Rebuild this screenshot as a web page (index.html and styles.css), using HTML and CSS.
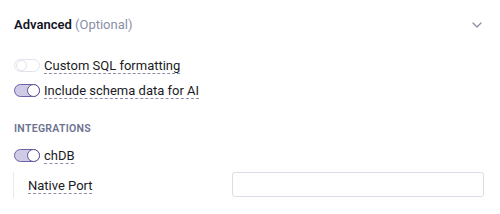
FILE: index.html
```html
<!DOCTYPE html>
<html>
<head>
<meta charset="utf-8">
<link rel="stylesheet" href="styles.css">
</head>
<body>
<div class="panel">
  <div class="header">
    <div class="title"><span class="strong">Advanced</span> <span class="muted">(Optional)</span></div>
    <svg class="chevron" width="10" height="6" viewBox="0 0 10 6"><path d="M1 1 L5 5 L9 1" fill="none" stroke="#8a90aa" stroke-width="1.3" stroke-linecap="round" stroke-linejoin="round"/></svg>
  </div>
  <div class="options">
    <label class="row"><span class="toggle"><span class="thumb"></span></span><span class="label">Custom SQL formatting</span></label>
    <label class="row"><span class="toggle on"><span class="thumb"></span></span><span class="label">Include schema data for AI</span></label>
  </div>
  <div class="section">INTEGRATIONS</div>
  <label class="row"><span class="toggle on"><span class="thumb"></span></span><span class="label">chDB</span></label>
  <div class="sub">
    <span class="label">Native Port</span>
    <div class="input"></div>
  </div>
</div>
</body>
</html>
```
FILE: styles.css
```css
* { box-sizing: border-box; }
body { margin: 0; background: #fff; font-family: Roboto, "Noto Sans", sans-serif; color: #1a1b25; }
.panel { padding: 16px 16px 0 14px; }
.header { display: flex; align-items: center; justify-content: space-between; height: 16px; }
.title { font-size: 13px; }
.strong { font-weight: 600; color: #13141f; }
.muted { color: #8a8fa8; }
.chevron { margin-right: 2px; margin-top: 1px; }
.options { display: flex; flex-direction: column; gap: 11px; margin-top: 26px; }
.row { display: flex; align-items: center; gap: 4px; height: 14px; }
.toggle { width: 26px; height: 13px; border: 1px solid #e2e3ec; border-radius: 7px; background: #fff; display: flex; align-items: center; padding: 0 1px; }
.thumb { width: 11px; height: 11px; border-radius: 50%; border: 1px solid #e2e3ec; background: #fff; }
.toggle.on { background: #cfcbe6; border-color: #6d62a8; justify-content: flex-end; padding: 0; }
.toggle.on .thumb { width: 13px; height: 13px; border: 1.3px solid #5e528f; margin-right: -1px; }
.label { font-size: 13px; color: #1a1b25; text-decoration: underline dashed #8a8fa8; text-underline-offset: 3px; text-decoration-thickness: 1px; }
.section { font-size: 10.5px; font-weight: 600; color: #6c7290; letter-spacing: 0.3px; margin: 25px 0 13px; }
.sub { display: flex; align-items: center; justify-content: space-between; border-left: 1px solid #e8e9ef; margin-top: 10px; padding-left: 14px; height: 26px; margin-left: -1px; }
.input { width: 252px; height: 25px; border: 1px solid #dcdde6; border-radius: 3px; margin-top: -2px; }
```
